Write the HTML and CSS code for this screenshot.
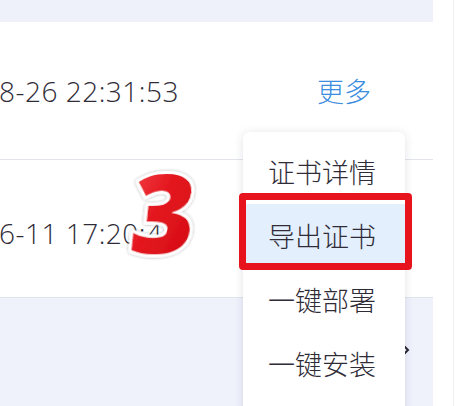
FILE: index.html
```html
<!DOCTYPE html>
<html lang="zh-CN">
<head>
<meta charset="utf-8">
<title>证书列表</title>
<link rel="stylesheet" href="styles.css">
</head>
<body>
<div class="page">
  <div class="table">
    <div class="head"></div>
    <div class="row row-first">
      <div class="cell time">8-26 22:31:53</div>
      <div class="cell op"><span class="link">更多</span></div>
    </div>
    <div class="row row-second">
      <div class="cell time">6-11 17:20:45</div>
    </div>
    <div class="foot">
      <svg class="chev" width="7" height="10" viewBox="0 0 7 10"><polyline points="1.5,1.5 5,5 1.5,8.5" fill="none" stroke="#2a2633" stroke-width="2"/></svg>
    </div>
  </div>
  <div class="side"></div>
</div>

<div class="menu">
  <div class="item">证书详情</div>
  <div class="item active">导出证书</div>
  <div class="item">一键部署</div>
  <div class="item">一键安装</div>
</div>

<div class="mark"></div>

<svg class="step" width="90" height="110" viewBox="0 0 90 110">
  <defs>
    <linearGradient id="red" x1="0" y1="0" x2="1" y2="1">
      <stop offset="0" stop-color="#f5474b"/>
      <stop offset="0.45" stop-color="#e3151d"/>
      <stop offset="1" stop-color="#d20c14"/>
    </linearGradient>
    <filter id="sh" x="-30%" y="-30%" width="160%" height="160%">
      <feDropShadow dx="0" dy="0" stdDeviation="1.6" flood-color="#000" flood-opacity="0.4"/>
    </filter>
  </defs>
  <text x="45" y="90" text-anchor="middle" class="step-text" fill="url(#red)" stroke="#ffffff" stroke-width="6" stroke-linejoin="round" paint-order="stroke" filter="url(#sh)" transform="skewX(-6) translate(9 0)">3</text>
</svg>
</body>
</html>
```

FILE: styles.css
```css
* { box-sizing: border-box; }

html, body {
  margin: 0;
  padding: 0;
  background: #ffffff;
}

body {
  width: 456px;
  height: 406px;
  overflow: hidden;
  position: relative;
  font-family: "Noto Sans CJK SC", "Noto Sans", sans-serif;
  color: #2f2c38;
}

.page {
  display: flex;
  height: 406px;
}

.table {
  width: 435px;
  display: flex;
  flex-direction: column;
}

.side {
  width: 21px;
  border-right: 1px solid #eef0f4;
  margin-right: 2px;
}

.head {
  height: 22px;
  background: #eef1fa;
}

.row {
  display: flex;
  align-items: center;
  height: 138px;
  border-bottom: 1px solid #e2e5ec;
}

.row-second {
  padding-top: 8px;
}

.cell.time {
  width: 318px;
  margin-left: -1px;
  white-space: nowrap;
  font-family: "Open Sans", "Noto Sans CJK SC", sans-serif;
  font-weight: 300;
  font-size: 28px;
  letter-spacing: 0.5px;
}

.link {
  font-size: 27px;
  font-weight: 300;
  color: #3b8de0;
}

.foot {
  flex: 1;
  background: #eff2fb;
  display: flex;
  align-items: center;
  padding-left: 403px;
  padding-bottom: 4px;
}

.chev {
  display: block;
}

.menu {
  position: absolute;
  left: 243px;
  top: 132px;
  width: 162px;
  height: 290px;
  background: #ffffff;
  border-radius: 6px;
  box-shadow: 0 1px 10px rgba(30, 40, 70, 0.13);
  padding-top: 8px;
  display: flex;
  flex-direction: column;
}

.item {
  height: 64px;
  line-height: 64px;
  padding-left: 25px;
  font-size: 27px;
  font-weight: 300;
  color: #2f2c38;
  white-space: nowrap;
}

.item.active {
  background: #e3effd;
}

.mark {
  position: absolute;
  left: 239px;
  top: 193px;
  width: 173px;
  height: 77px;
  border: 7px solid #e8141d;
  border-radius: 4px;
}

.step {
  position: absolute;
  left: 115px;
  top: 164px;
  overflow: visible;
}

.step-text {
  font-family: "Open Sans", sans-serif;
  font-weight: 800;
  font-size: 110px;
}
```
